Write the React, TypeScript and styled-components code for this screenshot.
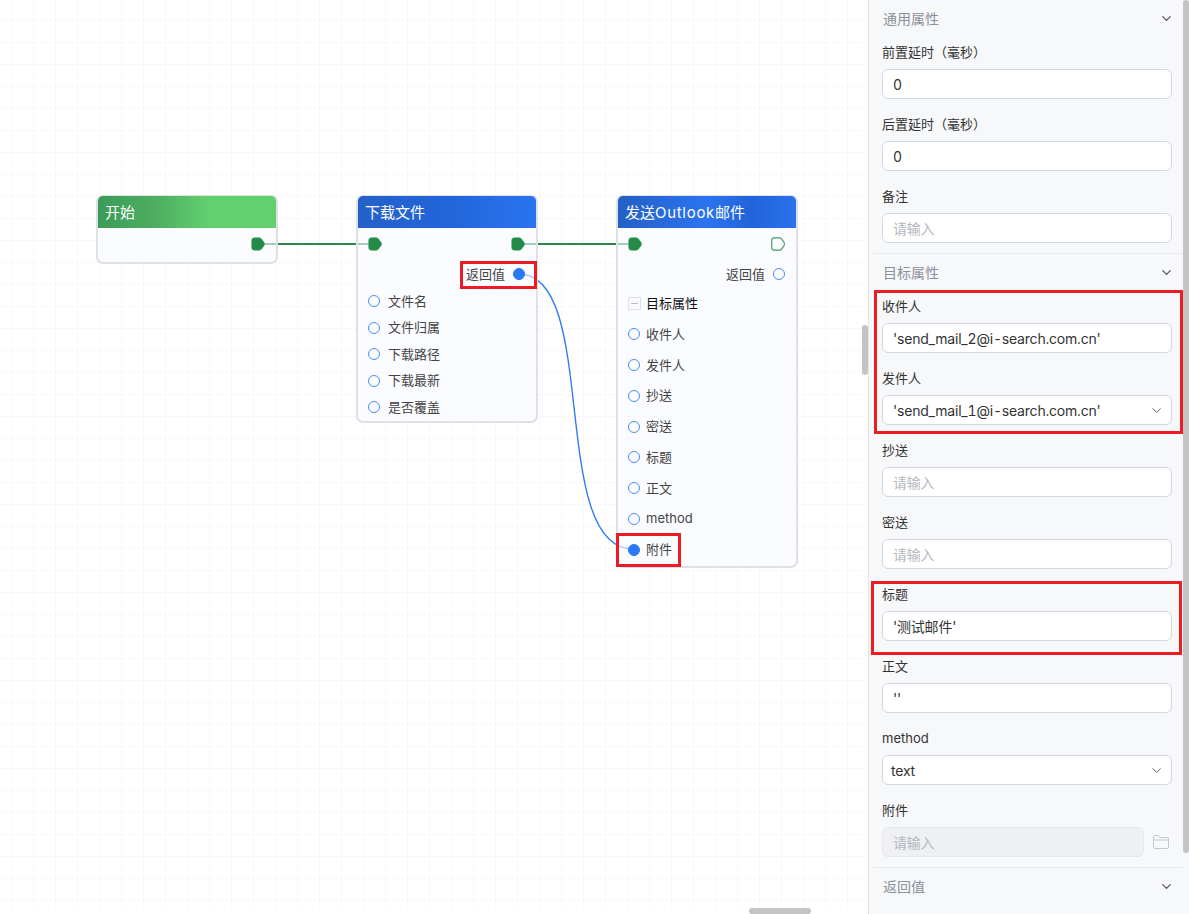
import * as React from "react";
import styled, { createGlobalStyle } from "styled-components";
import { ChevronDown } from "lucide-react";

const GlobalStyle = createGlobalStyle`
  html, body, #root {
    margin: 0;
    height: 100%;
  }
  body {
    overflow: hidden;
    background: #fff;
    font-family: "Inter", "Noto Sans CJK SC", sans-serif;
  }
  * {
    box-sizing: border-box;
  }
`;

const Page = styled.div`
  display: flex;
  width: 100%;
  height: 100%;
`;

const Canvas = styled.div`
  position: relative;
  flex: 1;
  min-width: 0;
  padding: 0 6px 6px 0;
  overflow: hidden;
`;

const Surface = styled.div`
  position: relative;
  height: 100%;
  background-color: #fff;
  background-image: linear-gradient(to right, #f8f8f8 1px, transparent 1px),
    linear-gradient(to bottom, #f8f8f8 1px, transparent 1px);
  background-size: 22px 22px;
  background-position: 11px 20px;
`;

const Wires = styled.svg`
  position: absolute;
  inset: 0;
  width: 100%;
  height: 100%;
`;

const Node = styled.div<{ $left: number; $top: number; $pad?: number }>`
  position: absolute;
  left: ${(p) => p.$left}px;
  top: ${(p) => p.$top}px;
  width: 182px;
  padding-bottom: ${(p) => p.$pad ?? 0}px;
  border: 2px solid #dfe0e6;
  border-radius: 7px;
  background: rgba(248, 250, 255, 0.6);
  color: #444;
  font-size: 13px;
`;

const NodeHeader = styled.div<{ $kind: "start" | "blue" | "blueMid" }>`
  display: flex;
  align-items: center;
  height: 33px;
  margin: -1px 0 0;
  padding: 0 7px 1px;
  border-bottom: 1px solid #fff;
  border-radius: 5px 5px 0 0;
  color: #fff;
  font-size: 15px;
  background: ${(p) =>
    p.$kind === "start"
      ? "linear-gradient(90deg, #3a9c58 0%, #4fb062 35%, #62d06e 62%, #62d06e 100%)"
      : p.$kind === "blue"
        ? "linear-gradient(90deg, #2460c8 0%, #2266dc 55%, #2a74f0 100%)"
        : "linear-gradient(90deg, #2460c4 0%, #2a74f0 50%, #2263d8 75%, #2a72ee 100%)"};
`;

const Latin = styled.span`
  letter-spacing: 0.7px;
`;

const HandleRow = styled.div`
  display: flex;
  align-items: center;
  justify-content: space-between;
  height: 30px;
  padding: 0 11px 0 10px;
`;

const Port = styled.div<{ $h: number; $right?: boolean; $gap?: number }>`
  display: flex;
  align-items: center;
  justify-content: ${(p) => (p.$right ? "flex-end" : "flex-start")};
  gap: ${(p) => p.$gap ?? 8}px;
  height: ${(p) => p.$h}px;
  padding: 0 11px 0 10px;
  white-space: nowrap;
`;

const PortName = styled.span`
  padding-bottom: 2px;
`;

const PortList = styled.div`
  margin-top: -1px;
`;

const Dot = styled.span<{ $filled?: boolean }>`
  flex: none;
  width: 12px;
  height: 12px;
  border: 1.5px solid #4a8cf7;
  border-radius: 50%;
  background: ${(p) => (p.$filled ? "#2a78f6" : "transparent")};
  border-color: ${(p) => (p.$filled ? "#2a78f6" : "#4a8cf7")};
`;

const GroupRow = styled.div`
  display: flex;
  align-items: center;
  gap: 5px;
  height: 28px;
  margin-bottom: 2px;
  padding: 0 10px;
  color: #111;
`;

const Collapse = styled.span`
  display: flex;
  align-items: center;
  justify-content: center;
  width: 13px;
  height: 13px;
  border: 1px solid #dfe1e6;
  background: #fbfbfc;

  &::before {
    content: "";
    width: 7px;
    height: 1px;
    background: #bbb;
  }
`;

const Mark = styled.div<{ $left: number; $top: number; $w: number; $h: number }>`
  position: absolute;
  z-index: 3;
  left: ${(p) => p.$left}px;
  top: ${(p) => p.$top}px;
  width: ${(p) => p.$w}px;
  height: ${(p) => p.$h}px;
  border: 3px solid #ed1c24;
  pointer-events: none;
`;

const Thumb = styled.div<{ $left: number; $top: number; $w: number; $h: number }>`
  position: absolute;
  z-index: 2;
  left: ${(p) => p.$left}px;
  top: ${(p) => p.$top}px;
  width: ${(p) => p.$w}px;
  height: ${(p) => p.$h}px;
  border-radius: 3px;
  background: #c4c4c4;
`;

const Panel = styled.aside`
  position: relative;
  flex: none;
  width: 321px;
  height: 100%;
  padding: 0 6px 0 4px;
  overflow: hidden;
  border-left: 1px solid #e3e5eb;
  background: #f7f8fa;
  color: #333;
`;

const Section = styled.section<{ $last?: boolean }>`
  padding: 0 11px 0 9px;
  border-bottom: ${(p) => (p.$last ? "none" : "1px solid #e8eaee")};
`;

const SectionHead = styled.div`
  display: flex;
  align-items: center;
  justify-content: space-between;
  height: 38px;
  padding: 0 0 2px 1px;
  color: #8b909a;
  font-size: 14px;

  svg {
    margin-right: -2px;
    color: #555;
  }
`;

const Field = styled.div`
  height: 72px;
  padding-bottom: 11px;

  &:last-child {
    height: 71px;
    padding-bottom: 10px;
  }
`;

const Label = styled.div`
  display: flex;
  align-items: center;
  height: 31px;
  padding-bottom: 4px;
  font-size: 13px;
  color: #333;
`;

const InputLine = styled.div`
  display: flex;
  align-items: center;
  gap: 9px;
  padding-right: 3px;
  color: #c5c8cf;
`;

const Box = styled.div<{ $disabled?: boolean; $tight?: boolean; $empty?: boolean }>`
  display: flex;
  flex: 1;
  align-items: center;
  justify-content: space-between;
  min-width: 0;
  height: 30px;
  padding: 0 7px 0 ${(p) => (p.$tight ? 8 : 10)}px;
  border: 1px solid ${(p) => (p.$disabled ? "#e6e8ed" : "#d3d7e2")};
  border-radius: 6px;
  background: ${(p) => (p.$disabled ? "#eff0f3" : "#fff")};
  color: ${(p) => (p.$empty ? "#b4b7be" : "#333")};
  font-size: 14px;
  font-variant-numeric: tabular-nums;
  letter-spacing: -0.2px;
  white-space: nowrap;

  svg {
    color: #666;
  }
`;

const Handle = ({ hollow }: { hollow?: boolean }) => (
  <svg width="14" height="14" viewBox="0 0 14 14">
    <path
      d="M3.5 .7H8Q9.6 .7 10.6 2L13.2 5.6Q14 7 13.2 8.4L10.6 12Q9.6 13.3 8 13.3H3.5Q.7 13.3 .7 10.5V3.5Q.7 .7 3.5 .7Z"
      fill={hollow ? "none" : "#238a47"}
      stroke={hollow ? "#62ac7e" : "#4f9f6c"}
      strokeWidth={hollow ? 1.4 : 0.6}
    />
  </svg>
);

const FolderIcon = () => (
  <svg width="16" height="14" viewBox="0 0 16 14" fill="none" stroke="currentColor" strokeWidth="1">
    <path d="M.5 12V2A1.5 1.5 0 0 1 2 .5h3.6l1.6 2H14A1.5 1.5 0 0 1 15.5 4v8A1.5 1.5 0 0 1 14 13.5H2A1.5 1.5 0 0 1 .5 12Z" />
    <path d="M.5 5h15" />
  </svg>
);

const commonFields = [
  { label: "前置延时（毫秒）", value: "0" },
  { label: "后置延时（毫秒）", value: "0" },
  { label: "备注" },
];

const targetFields: { label: string; value?: string; select?: boolean; tight?: boolean }[] = [
  { label: "收件人", value: "'send_mail_2@i-search.com.cn'" },
  { label: "发件人", value: "'send_mail_1@i-search.com.cn'", select: true },
  { label: "抄送" },
  { label: "密送" },
  { label: "标题", value: "'测试邮件'" },
  { label: "正文", value: "''" },
  { label: "method", value: "text", select: true, tight: true },
];

const mailPorts = ["收件人", "发件人", "抄送", "密送", "标题", "正文", "method"];
const filePorts = ["文件名", "文件归属", "下载路径", "下载最新", "是否覆盖"];

export default function App() {
  return (
    <Page>
      <GlobalStyle />
      <Canvas>
        <Surface>
          <Wires>
            <path d="M258 244H375M518 244H635" stroke="#2b8a4b" strokeWidth="2" fill="none" />
            <path d="M519 274C600 274 548 549 633 549" stroke="#2f7bf5" strokeWidth="1.4" fill="none" />
          </Wires>

          <Node $left={96} $top={195} $pad={3}>
            <NodeHeader $kind="start">开始</NodeHeader>
            <HandleRow>
              <span />
              <Handle />
            </HandleRow>
          </Node>

          <Node $left={356} $top={195}>
            <NodeHeader $kind="blue">下载文件</NodeHeader>
            <HandleRow>
              <Handle />
              <Handle />
            </HandleRow>
            <Port $h={30} $right>
              <PortName>返回值</PortName>
              <Dot $filled />
            </Port>
            <PortList>
              {filePorts.map((name) => (
                <Port key={name} $h={26.5}>
                  <Dot />
                  <PortName>{name}</PortName>
                </Port>
              ))}
            </PortList>
          </Node>

          <Node $left={616} $top={195} $pad={1}>
            <NodeHeader $kind="blueMid">
              <span>
                发送<Latin>Outlook</Latin>邮件
              </span>
            </NodeHeader>
            <HandleRow>
              <Handle />
              <Handle hollow />
            </HandleRow>
            <Port $h={30} $right>
              <PortName>返回值</PortName>
              <Dot />
            </Port>
            <GroupRow>
              <Collapse />
              <PortName>目标属性</PortName>
            </GroupRow>
            {mailPorts.map((name) => (
              <Port key={name} $h={30.75} $gap={6}>
                <Dot />
                <PortName>{name}</PortName>
              </Port>
            ))}
            <Port $h={30.75} $gap={6}>
              <Dot $filled />
              <PortName>附件</PortName>
            </Port>
          </Node>

          <Mark $left={460} $top={261} $w={77} $h={28} />
          <Mark $left={616} $top={533} $w={65} $h={34} />
        </Surface>
        <Thumb $left={862} $top={325} $w={6} $h={50} />
        <Thumb $left={749} $top={908} $w={62} $h={6} />
      </Canvas>

      <Panel>
        <Section>
          <SectionHead>
            通用属性
            <ChevronDown size={15} />
          </SectionHead>
          {commonFields.map((f) => (
            <Field key={f.label}>
              <Label>{f.label}</Label>
              <Box $empty={!f.value}>{f.value ?? "请输入"}</Box>
            </Field>
          ))}
        </Section>

        <Section>
          <SectionHead>
            目标属性
            <ChevronDown size={15} />
          </SectionHead>
          {targetFields.map((f) => (
            <Field key={f.label}>
              <Label>{f.label}</Label>
              <Box $empty={!f.value} $tight={f.tight}>
                {f.value ?? "请输入"}
                {f.select && <ChevronDown size={15} strokeWidth={1.6} />}
              </Box>
            </Field>
          ))}
          <Field>
            <Label>附件</Label>
            <InputLine>
              <Box $disabled $empty>
                请输入
              </Box>
              <FolderIcon />
            </InputLine>
          </Field>
        </Section>

        <Section $last>
          <SectionHead>
            返回值
            <ChevronDown size={15} />
          </SectionHead>
        </Section>

        <Mark $left={5} $top={290} $w={309} $h={144} />
        <Mark $left={2} $top={581} $w={311} $h={74} />
        <Thumb $left={314} $top={0} $w={6} $h={853} />
      </Panel>
    </Page>
  );
}
